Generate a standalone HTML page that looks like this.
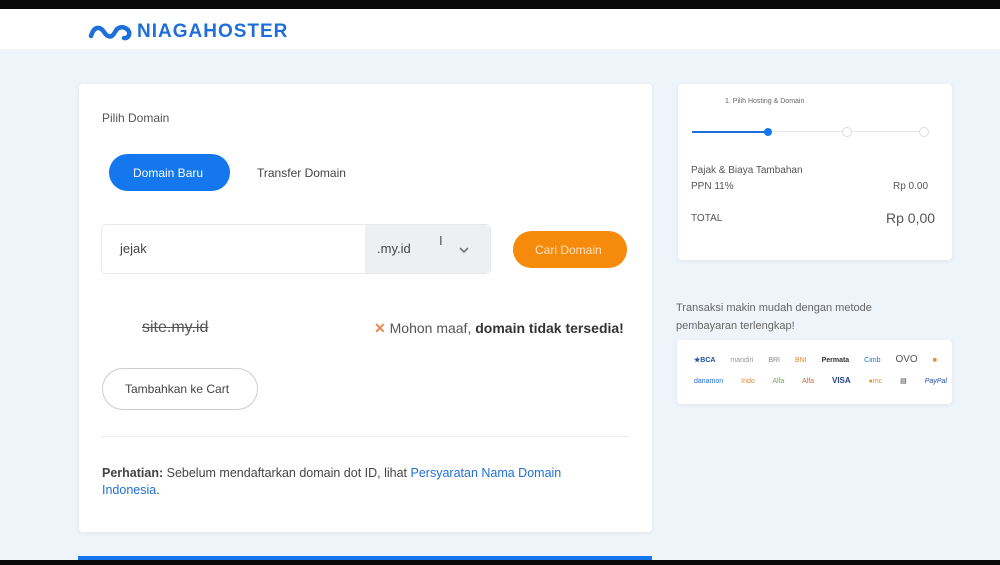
<!DOCTYPE html>
<html><head><meta charset="utf-8"><style>
*{margin:0;padding:0;box-sizing:border-box}
body{width:1000px;height:565px;overflow:hidden;background:#eef4fa;font-family:"Liberation Sans",sans-serif;position:relative;color:#444}
.abs{position:absolute}
.card{position:absolute;background:#fff;border-radius:4px;box-shadow:0 1px 4px rgba(0,0,0,.06)}
.t{position:absolute;white-space:nowrap}
</style></head><body>
<div class="abs" style="left:0;top:0;width:1000px;height:9px;background:#0a0a0a"></div>
<div class="abs" style="left:0;top:9px;width:1000px;height:40px;background:#fff"></div>
<svg class="abs" style="left:88px;top:22px" width="44" height="20" viewBox="0 0 44 20"><path d="M3 14 C6 4,12 4,16 10 C20 16,24 16,27 10 C30 4,36 4,40 8 M40 8 C43 12,40 17,36 16" fill="none" stroke="#1e6fd9" stroke-width="4.5" stroke-linecap="round"/></svg>
<div class="t" style="left:137px;top:21px;font-size:19px;font-weight:bold;color:#1e6fd9;letter-spacing:1px">NIAGAHOSTER</div>

<div class="card" style="left:79px;top:84px;width:573px;height:448px"></div>
<div class="t" style="left:102px;top:111px;font-size:12px;color:#555">Pilih Domain</div>
<div class="abs" style="left:109px;top:154px;width:121px;height:37px;border-radius:19px;background:#1477ee"></div>
<div class="t" style="left:133px;top:166px;font-size:12px;color:#fff">Domain Baru</div>
<div class="t" style="left:257px;top:166px;font-size:12px;color:#444">Transfer Domain</div>
<div class="abs" style="left:101px;top:224px;width:390px;height:50px;border:1px solid #e6e9ee;border-radius:5px;background:#fff"></div>
<div class="abs" style="left:365px;top:225px;width:125px;height:48px;background:#eeeff1;border-radius:0 5px 5px 0"></div>
<div class="t" style="left:120px;top:241px;font-size:13px;color:#444">jejak</div>
<div class="t" style="left:377px;top:241px;font-size:13px;color:#444">.my.id</div>
<div class="t" style="left:439px;top:233px;font-size:13px;color:#555">I</div>
<svg class="abs" style="left:458px;top:246px" width="12" height="8"><path d="M2 2 L6 6 L10 2" fill="none" stroke="#777" stroke-width="1.6"/></svg>
<div class="abs" style="left:513px;top:231px;width:114px;height:37px;border-radius:19px;background:#f68a0b"></div>
<div class="t" style="left:535px;top:243px;font-size:12px;color:#fde3c4">Cari Domain</div>
<div class="t" style="left:142px;top:319px;font-size:16px;color:#555;text-decoration:line-through">site.my.id</div>
<div class="t" style="left:374px;top:320px;font-size:14px;color:#555"><span style="color:#e58a4c;font-weight:bold">✕</span> Mohon maaf, <b style="color:#333">domain tidak tersedia!</b></div>
<div class="abs" style="left:102px;top:368px;width:156px;height:42px;border:1px solid #ccc;border-radius:21px"></div>
<div class="t" style="left:125px;top:382px;font-size:12px;color:#444">Tambahkan ke Cart</div>
<div class="abs" style="left:101px;top:436px;width:528px;height:1px;background:#ececec"></div>
<div class="t" style="left:102px;top:465px;font-size:12.5px;line-height:17px;color:#444;white-space:normal;width:500px"><b>Perhatian:</b> Sebelum mendaftarkan domain dot ID, lihat <span style="color:#1e6fd9">Persyaratan Nama Domain Indonesia</span>.</div>
<div class="abs" style="left:78px;top:556px;width:574px;height:6px;background:#1477ee"></div>
<div class="abs" style="left:0;top:560px;width:1000px;height:5px;background:#0a0a0a"></div>

<div class="card" style="left:678px;top:84px;width:274px;height:176px"></div>
<div class="t" style="left:725px;top:98px;font-size:7px;color:#666">1. Pilih Hosting &amp; Domain</div>
<div class="abs" style="left:692px;top:131px;width:76px;height:2px;background:#1e6fd9"></div>
<div class="abs" style="left:768px;top:131px;width:160px;height:1px;background:#e4e7eb"></div>
<div class="abs" style="left:764px;top:128px;width:8px;height:8px;border-radius:50%;background:#1477ee"></div>
<div class="abs" style="left:842px;top:127px;width:10px;height:10px;border-radius:50%;border:1px solid #ddd;background:#fff"></div>
<div class="abs" style="left:919px;top:127px;width:10px;height:10px;border-radius:50%;border:1px solid #ddd;background:#fff"></div>
<div class="t" style="left:691px;top:165px;font-size:10px;color:#555">Pajak &amp; Biaya Tambahan</div>
<div class="t" style="left:691px;top:181px;font-size:10px;color:#555">PPN 11%</div>
<div class="t" style="left:893px;top:181px;font-size:10px;color:#555">Rp 0.00</div>
<div class="t" style="left:691px;top:213px;font-size:10px;color:#555">TOTAL</div>
<div class="t" style="left:886px;top:210px;font-size:14px;color:#555">Rp 0,00</div>
<div class="t" style="left:676px;top:299px;font-size:11px;line-height:18px;color:#666">Transaksi makin mudah dengan metode<br>pembayaran terlengkap!</div>
<div class="card" style="left:677px;top:340px;width:275px;height:64px"></div>
<div class="t" style="left:694px;top:354px;font-size:7px;color:#333;word-spacing:13px">
<span style="color:#1e4fa8;font-weight:bold">★BCA</span> <span style="color:#999">mandiri</span> <span style="color:#888">BRI</span> <span style="color:#e58a2c">BNI</span> <b>Permata</b> <span style="color:#1e6fd9">Cimb</span> <span style="font-size:10px;color:#555">OVO</span> <span style="color:#e58a2c">■</span></div>
<div class="t" style="left:694px;top:376px;font-size:7px;color:#333;word-spacing:16px">
<span style="color:#1e6fd9">danamon</span> <span style="color:#e58a2c">Indo</span> <span style="color:#7a4">Alfa</span> <span style="color:#c63">Alfa</span> <b style="color:#1e3f8a;font-size:8px">VISA</b> <span style="color:#e58a2c">●mc</span> <span>▤</span> <i style="color:#1e4fa8">PayPal</i></div>
</body></html>
